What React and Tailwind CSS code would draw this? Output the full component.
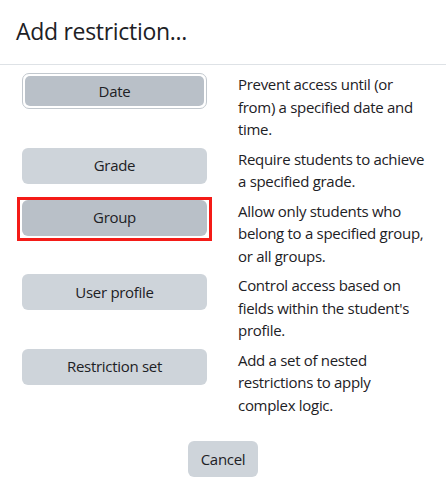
const rows = [
  {
    label: 'Date',
    text: 'Prevent access until (or from) a specified date and time.',
    state: 'focus',
  },
  { label: 'Grade', text: 'Require students to achieve a specified grade.' },
  {
    label: 'Group',
    text: 'Allow only students who belong to a specified group, or all groups.',
    state: 'marked',
  },
  {
    label: 'User profile',
    text: "Control access based on fields within the student's profile.",
  },
  {
    label: 'Restriction set',
    text: 'Add a set of nested restrictions to apply complex logic.',
  },
]

const RowButton = ({ label, state }) => {
  if (state === 'focus') {
    return (
      <div className="w-[185px] h-[36px] rounded-[7px] border border-[#c2c8ce] p-[2px]">
        <div className="h-full rounded-[5px] bg-[#b9c0c8] flex items-center justify-center">
          {label}
        </div>
      </div>
    )
  }
  if (state === 'marked') {
    return (
      <div className="-m-[5px] -mt-[3px] w-[195px] h-[44px] border-[3px] border-[#f41b17] px-[2px] pb-[2px]">
        <div className="h-[36px] rounded-[6px] bg-[#b9c0c8] flex items-center justify-center">
          {label}
        </div>
      </div>
    )
  }
  return (
    <div className="w-[185px] h-[36px] rounded-[6px] bg-[#ced4da] flex items-center justify-center">
      {label}
    </div>
  )
}

export default function App() {
  return (
    <div
      className="w-[446px] h-[484px] bg-white text-[#1d2125] overflow-hidden"
      style={{ fontFamily: '"Open Sans", "Noto Sans", sans-serif' }}
    >
      <div className="h-[65px] border-b border-[#dee2e6] px-4 pt-[14px]">
        <h1 className="text-[23px] leading-[34px] font-normal tracking-[-0.3px]">
          Add restriction...
        </h1>
      </div>
      <div className="pt-[8px] pl-[22px]">
        {rows.map((r) => (
          <div key={r.label} className="flex mb-[7px] text-[15px] leading-[22.5px] tracking-[-0.3px]">
            <div className="w-[216px] shrink-0">
              <RowButton label={r.label} state={r.state} />
            </div>
            <p className="w-[187px]">{r.text}</p>
          </div>
        ))}
        <div className="flex justify-center pr-[22px] mt-[25px]">
          <div className="w-[70px] h-[36px] rounded-[6px] bg-[#ced4da] flex items-center justify-center text-[15px] tracking-[-0.3px]">
            Cancel
          </div>
        </div>
      </div>
    </div>
  )
}
